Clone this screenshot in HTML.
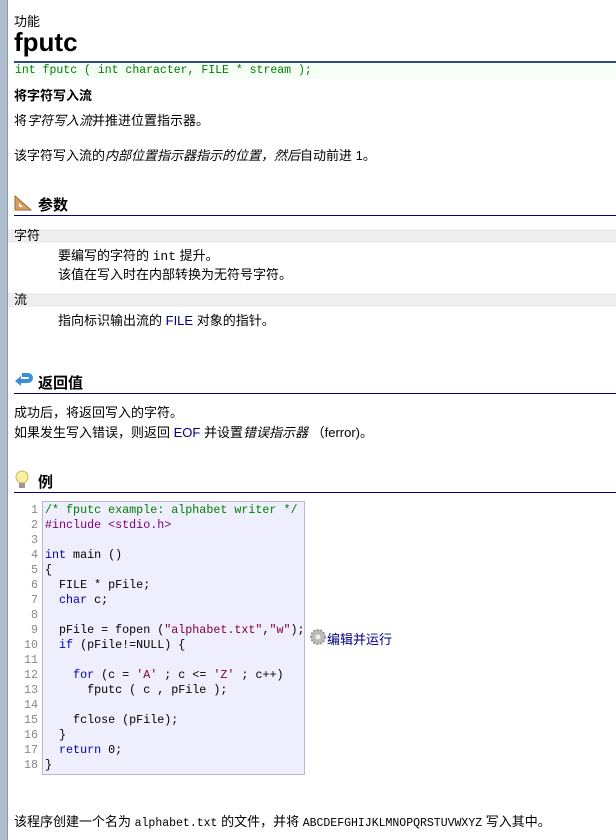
<!DOCTYPE html>
<html><head><meta charset="utf-8"><style>
body{margin:0;width:616px;height:840px;overflow:hidden;background:#fff;font-family:"Liberation Sans","Noto Sans CJK SC",sans-serif;font-size:13px;color:#000;position:relative}
.bar{position:absolute;left:0;top:0;width:7px;height:840px;background:#b0bfcf;border-right:1px solid #8a9aab}
.a{position:absolute;left:14px;white-space:nowrap}
.mono{font-family:"Liberation Mono",monospace}
.h{position:absolute;left:14px;right:0;border-bottom:1px solid #000080;font-weight:bold;font-size:15px;height:22px}
.h span{position:absolute;left:24px;top:1px}
.row{position:absolute;left:8px;right:0;height:14px;background:#eee;padding-left:6px;line-height:14px}
.blue{color:#000080}
pre{margin:0;font-family:"Liberation Mono",monospace;font-size:11.7px;line-height:15px}
.kw{color:#0000c0}.cm{color:#008000}.pp{color:#800080}.st{color:#800040}
</style></head><body>
<div class="bar"></div>
<div class="a" style="top:11px">功能</div>
<div class="a" style="top:27px;font-size:26px;font-weight:bold">fputc</div>
<div style="position:absolute;left:14px;right:0;top:61px;height:2px;background:#2f4a8a"></div>
<div class="a mono" style="top:63px;right:0;background:#f6fff6;color:#008000;font-size:11.5px;height:16px;line-height:16px;padding-left:1px">int fputc ( int character, FILE * stream );</div>
<div class="a" style="top:85px;font-weight:bold">将字符写入流</div>
<div class="a" style="top:110px">将<i>字符写入流</i>并推进位置指示器。</div>
<div class="a" style="top:145px">该字符写入流的<i>内部位置指示器指示的位置，然后</i>自动前进 1。</div>
<div class="h" style="top:193px"><svg style="position:absolute;left:0;top:2px" width="18" height="16"><polygon points="1,1 1,15 17,15" fill="#d8a060" stroke="#9a6a30"/><polygon points="5,8 5,12 9,12" fill="#fff"/></svg><span>参数</span></div>
<div class="row" style="top:229px">字符</div>
<div class="a" style="left:58px;top:245px">要编写的字符的 <span class="mono">int</span> 提升。</div>
<div class="a" style="left:58px;top:264px">该值在写入时在内部转换为无符号字符。</div>
<div class="row" style="top:293px">流</div>
<div class="a" style="left:58px;top:310px">指向标识输出流的 <span class="blue">FILE</span> 对象的指针。</div>
<div class="h" style="top:371px"><svg style="position:absolute;left:0;top:1px" width="20" height="18"><path d="M3 9 H14 a3 3 0 0 0 0-6 H8" fill="none" stroke="#3a8fd8" stroke-width="4"/><polygon points="1,9 7,4 7,14" fill="#3a8fd8"/></svg><span>返回值</span></div>
<div class="a" style="top:402px">成功后，将返回写入的字符。</div>
<div class="a" style="top:422px">如果发生写入错误，则返回 <span class="blue">EOF</span> 并设置<i>错误指示器</i> （ferror)。</div>
<div class="h" style="top:470px"><svg style="position:absolute;left:0;top:0" width="16" height="20"><circle cx="8" cy="7" r="6" fill="#f8f0a0" stroke="#c8b850"/><rect x="5" y="13" width="6" height="5" fill="#999"/></svg><span>例</span></div>
<pre style="position:absolute;left:14px;top:503px;width:24px;text-align:right;color:#888">1
2
3
4
5
6
7
8
9
10
11
12
13
14
15
16
17
18</pre>
<div style="position:absolute;left:42px;top:501px;width:261px;height:272px;background:#eeeefd;border:1px solid #b8b8d0"></div>
<pre style="position:absolute;left:45px;top:503px"><span class="cm">/* fputc example: alphabet writer */</span>
<span class="pp">#include &lt;stdio.h&gt;</span>

<span class="kw">int</span> main ()
{
  FILE * pFile;
  <span class="kw">char</span> c;

  pFile = fopen (<span class="st">"alphabet.txt"</span>,<span class="st">"w"</span>);
  <span class="kw">if</span> (pFile!=NULL) {

    <span class="kw">for</span> (c = <span class="st">'A'</span> ; c &lt;= <span class="st">'Z'</span> ; c++)
      fputc ( c , pFile );

    fclose (pFile);
  }
  <span class="kw">return</span> 0;
}</pre>
<svg style="position:absolute;left:310px;top:629px" width="16" height="16"><circle cx="8" cy="8" r="7" fill="#bbb" stroke="#999" stroke-dasharray="2 1.5" stroke-width="2"/><circle cx="8" cy="8" r="2.5" fill="#eee"/></svg>
<div class="a blue" style="left:327px;top:629px">编辑并运行</div>
<div class="a" style="top:811px">该程序创建一个名为 <span class="mono" style="font-size:11.5px">alphabet.txt</span> 的文件，并将 <span class="mono" style="font-size:11.5px">ABCDEFGHIJKLMNOPQRSTUVWXYZ</span> 写入其中。</div>
</body></html>
